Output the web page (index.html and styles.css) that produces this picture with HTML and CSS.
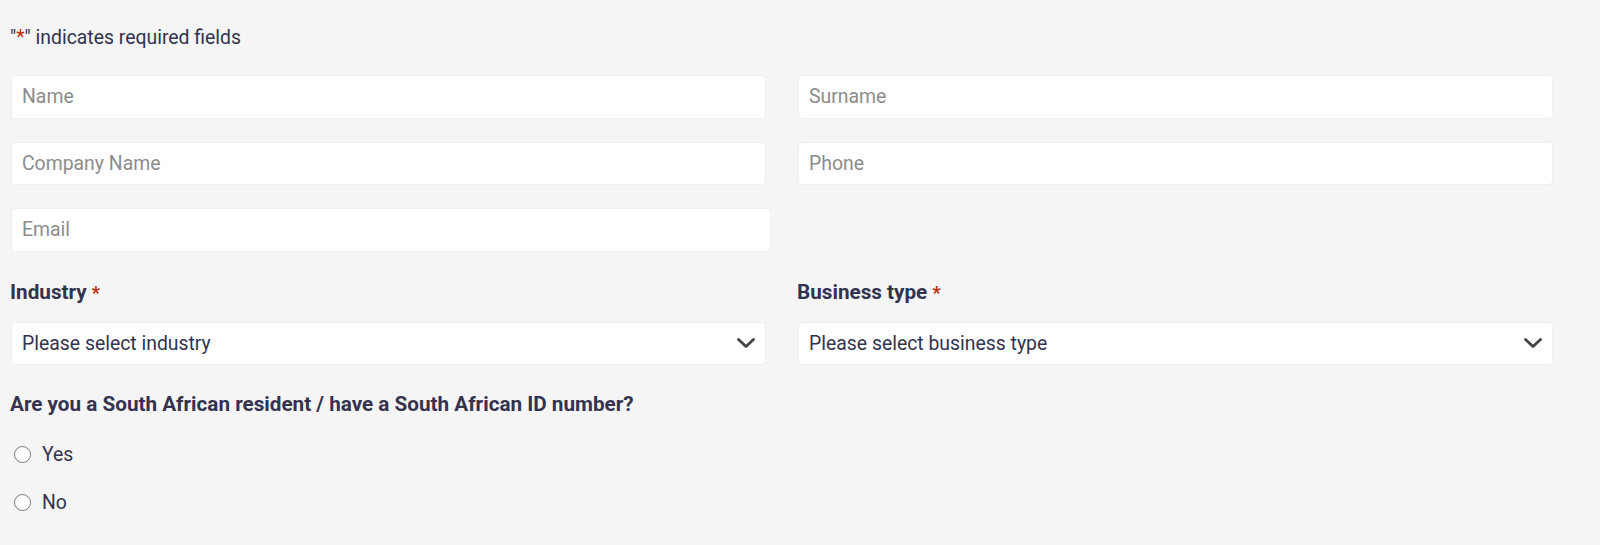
FILE: index.html
```html
<!DOCTYPE html>
<html lang="en">
<head>
<meta charset="utf-8">
<title>Form</title>
<link rel="stylesheet" href="styles.css">
</head>
<body>
<form class="form">
  <p class="required-note">"<span class="req">*</span>" indicates required fields</p>
  <div class="grid">
    <input class="field" type="text" placeholder="Name">
    <input class="field" type="text" placeholder="Surname">
    <input class="field" type="text" placeholder="Company Name">
    <input class="field" type="text" placeholder="Phone">
    <input class="field field-email" type="email" placeholder="Email">
  </div>
  <div class="grid selects">
    <div class="group">
      <label class="label">Industry <span class="req">*</span></label>
      <div class="select">
        <span>Please select industry</span>
        <svg class="chev" width="18" height="11" viewBox="0 0 18 11"><path d="M1.5 1.5 L9 8.5 L16.5 1.5" fill="none" stroke="#444" stroke-width="2.8" stroke-linecap="round" stroke-linejoin="round"/></svg>
      </div>
    </div>
    <div class="group">
      <label class="label">Business type <span class="req">*</span></label>
      <div class="select">
        <span>Please select business type</span>
        <svg class="chev" width="18" height="11" viewBox="0 0 18 11"><path d="M1.5 1.5 L9 8.5 L16.5 1.5" fill="none" stroke="#444" stroke-width="2.8" stroke-linecap="round" stroke-linejoin="round"/></svg>
      </div>
    </div>
  </div>
  <fieldset class="question">
    <legend class="label q-label">Are you a South African resident / have a South African ID number?</legend>
    <label class="radio"><span class="dot"></span>Yes</label>
    <label class="radio"><span class="dot"></span>No</label>
  </fieldset>
</form>
</body>
</html>
```
FILE: styles.css
```css
* { box-sizing: border-box; }
html, body { margin: 0; background: #f5f5f5; }
body {
  font-family: Roboto, "Liberation Sans", Arial, sans-serif;
  color: #33334f;
}
.form { padding: 0 47px 0 10px; }
.required-note {
  margin: 0;
  padding-top: 27px;
  font-size: 19.4px;
  line-height: 22px;
}
.req { color: #c02b0a; }
.grid {
  display: grid;
  grid-template-columns: 1fr 1fr;
  column-gap: 32px;
  row-gap: 23px;
  margin-top: 26px;
  padding-left: 1px;
}
.field {
  display: block;
  width: 100%;
  height: 43.5px;
  border: 1px solid #efefef;
  border-radius: 4px;
  background: #fff;
  font-family: inherit;
  font-size: 19.4px;
  color: #33334f;
  padding: 0 10px;
  outline: none;
}
.field::placeholder { color: #8c8c8c; }
.field-email { width: calc(100% + 5px); }
.selects { margin-top: 27px; }
.group { display: flex; flex-direction: column; }
.label {
  display: block;
  font-weight: 700;
  font-size: 20.7px;
  line-height: 26px;
  margin-left: -1px;
}
.label .req { font-size: 18px; }
.select {
  margin-top: 16px;
  height: 43px;
  border: 1px solid #efefef;
  border-radius: 4px;
  background: #fff;
  display: flex;
  align-items: center;
  justify-content: space-between;
  padding: 0 10px;
  font-size: 19.4px;
}
.chev { display: block; }
.question {
  border: 0;
  margin: 26px 0 0;
  padding: 0;
}
.q-label { padding: 0; margin: 0 0 26px; }
.radio {
  display: flex;
  align-items: center;
  height: 24px;
  margin-bottom: 24px;
  font-size: 19.4px;
  margin-left: 4px;
}
.dot {
  width: 17px;
  height: 17px;
  border: 1.5px solid #777;
  border-radius: 50%;
  background: #fff;
  margin-right: 11px;
}
```
